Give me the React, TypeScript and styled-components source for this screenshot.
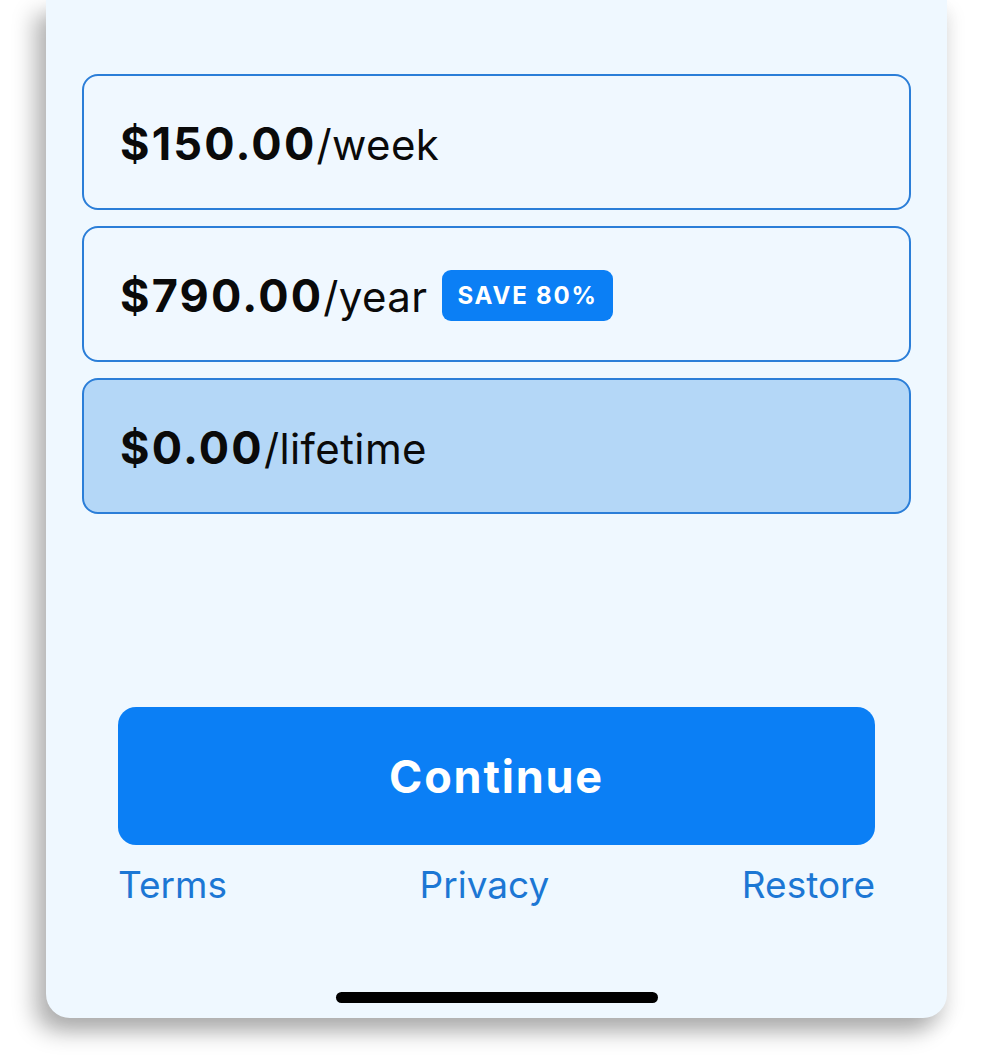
import styled, { createGlobalStyle } from 'styled-components';

const GlobalStyle = createGlobalStyle`
  html, body {
    margin: 0;
    padding: 0;
    background: #ffffff;
    font-family: Inter, "Noto Sans", "Liberation Sans", sans-serif;
  }
`;

const Page = styled.div`
  width: 993px;
  height: 1064px;
  overflow: hidden;
  background: #ffffff;
`;

const Screen = styled.div`
  box-sizing: border-box;
  margin-left: 46px;
  width: 901px;
  height: 1018px;
  display: flex;
  flex-direction: column;
  padding: 74px 36px 0 36px;
  background: #eff8ff;
  border-radius: 0 0 24px 24px;
  box-shadow: -12px 14px 22px rgba(0, 0, 0, 0.28), 4px 10px 18px rgba(0, 0, 0, 0.08);
`;

const PlanList = styled.ul`
  list-style: none;
  margin: 0;
  padding: 0;
  display: flex;
  flex-direction: column;
  gap: 16px;
`;

const PlanCard = styled.li<{ $selected?: boolean }>`
  box-sizing: border-box;
  height: 136px;
  display: flex;
  align-items: center;
  gap: 15px;
  padding: 3px 36px 0 36px;
  border: 2px solid #2b7ed8;
  border-radius: 16px;
  background: ${({ $selected }) => ($selected ? '#b4d7f7' : '#f0f8ff')};
  color: #0a0a0a;
  cursor: pointer;
`;

const Price = styled.span`
  display: inline-flex;
  align-items: baseline;
`;

const Amount = styled.strong`
  font-size: 45px;
  font-weight: 700;
  letter-spacing: 2.2px;
`;

const Period = styled.span`
  font-size: 42px;
  font-weight: 400;
  letter-spacing: 0.4px;
`;

const Badge = styled.span`
  display: inline-flex;
  align-items: center;
  height: 51px;
  padding: 0 15px;
  border-radius: 9px;
  background: #0b7ff5;
  color: #ffffff;
  font-size: 24px;
  font-weight: 700;
  letter-spacing: 1.8px;
`;

const Footer = styled.div`
  margin-top: 193px;
  padding: 0 36px;
  display: flex;
  flex-direction: column;
`;

const ContinueButton = styled.button`
  height: 138px;
  border: none;
  border-radius: 18px;
  background: #0b7ff5;
  color: #ffffff;
  font-family: inherit;
  font-size: 45px;
  font-weight: 700;
  letter-spacing: 1.8px;
  cursor: pointer;
`;

const Links = styled.nav`
  margin-top: 17px;
  display: flex;
  justify-content: space-between;
`;

const LinkText = styled.a`
  font-size: 37px;
  line-height: 46px;
  color: #1c77d4;
  text-decoration: none;
  cursor: pointer;
`;

const HomeBar = styled.div`
  align-self: center;
  margin-top: auto;
  margin-bottom: 15px;
  width: 322px;
  height: 11px;
  border-radius: 6px;
  background: #000000;
`;

const plans = [
  { amount: '$150.00', period: '/week' },
  { amount: '$790.00', period: '/year', badge: 'SAVE 80%' },
  { amount: '$0.00', period: '/lifetime', selected: true },
];

export default function App() {
  return (
    <Page>
      <GlobalStyle />
      <Screen>
        <PlanList>
          {plans.map((plan) => (
            <PlanCard key={plan.period} $selected={plan.selected}>
              <Price>
                <Amount>{plan.amount}</Amount>
                <Period>{plan.period}</Period>
              </Price>
              {plan.badge && <Badge>{plan.badge}</Badge>}
            </PlanCard>
          ))}
        </PlanList>
        <Footer>
          <ContinueButton>Continue</ContinueButton>
          <Links>
            <LinkText>Terms</LinkText>
            <LinkText>Privacy</LinkText>
            <LinkText>Restore</LinkText>
          </Links>
        </Footer>
        <HomeBar />
      </Screen>
    </Page>
  );
}
